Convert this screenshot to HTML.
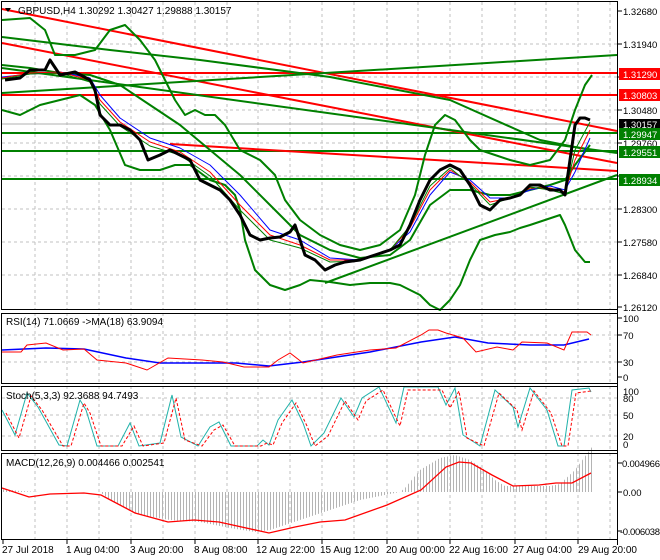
<!DOCTYPE html>
<html><head><meta charset="utf-8"><style>
html,body{margin:0;padding:0;background:#fff;}
svg{display:block;font-family:"Liberation Sans",sans-serif;font-size:10px;}
.r{font-size:9.5px;}
</style></head><body>
<svg width="660" height="560" viewBox="0 0 660 560" xmlns="http://www.w3.org/2000/svg">
<defs>
<pattern id="hb" width="3" height="10" patternUnits="userSpaceOnUse"><rect x="0" y="0" width="1" height="10" fill="#b4b4b4"/></pattern>
</defs>
<rect width="660" height="560" fill="#fff"/>
<g stroke="#c0c0c0" stroke-dasharray="3,3" stroke-width="1">
<path d="M35 2V309M67 2V309M99 2V309M131 2V309M163 2V309M195 2V309M227 2V309M258 2V309M290 2V309M322 2V309M354 2V309M387 2V309M418 2V309M450 2V309M482 2V309M515 2V309M546 2V309M578 2V309M610 2V309"/>
<path d="M2 44H617M2 77H617M2 110H617M2 143H617M2 176H617M2 209H617M2 242H617M2 275H617"/>
<path d="M35 313V384M67 313V384M99 313V384M131 313V384M163 313V384M195 313V384M227 313V384M258 313V384M290 313V384M322 313V384M354 313V384M387 313V384M418 313V384M450 313V384M482 313V384M515 313V384M546 313V384M578 313V384M610 313V384 M2 335H617M2 362H617"/>
<path d="M35 386V450M67 386V450M99 386V450M131 386V450M163 386V450M195 386V450M227 386V450M258 386V450M290 386V450M322 386V450M354 386V450M387 386V450M418 386V450M450 386V450M482 386V450M515 386V450M546 386V450M578 386V450M610 386V450 M2 398H617M2 415H617M2 436H617"/>
<path d="M35 453V539M67 453V539M99 453V539M131 453V539M163 453V539M195 453V539M227 453V539M258 453V539M290 453V539M322 453V539M354 453V539M387 453V539M418 453V539M450 453V539M482 453V539M515 453V539M546 453V539M578 453V539M610 453V539"/>
</g>
<g fill="none" stroke-linejoin="round">
<line x1="2" y1="124" x2="617" y2="124" stroke="#b0b0b0"/>
<line x1="2" y1="73" x2="617" y2="73" stroke="#ff0000" stroke-width="2"/>
<line x1="2" y1="95" x2="617" y2="95" stroke="#ff0000" stroke-width="2"/>
<line x1="2" y1="133" x2="617" y2="133" stroke="#008000" stroke-width="2"/>
<line x1="2" y1="151" x2="617" y2="151" stroke="#008000" stroke-width="2"/>
<line x1="2" y1="179" x2="617" y2="179" stroke="#008000" stroke-width="2"/>
<line x1="2" y1="9" x2="617" y2="131" stroke="#ff0000" stroke-width="2"/>
<line x1="2" y1="43" x2="617" y2="163" stroke="#ff0000" stroke-width="2"/>
<line x1="170" y1="144" x2="617" y2="171" stroke="#ff0000" stroke-width="2"/>
<line x1="2" y1="93" x2="617" y2="55" stroke="#008000" stroke-width="2"/>
<line x1="2" y1="68" x2="617" y2="153" stroke="#008000" stroke-width="2"/>
<polyline points="2,37 110,50 200,60 330,77 450,100 540,140 590,150" stroke="#008000" stroke-width="2"/>
<line x1="325" y1="283" x2="617" y2="175" stroke="#008000" stroke-width="2"/>
<polyline stroke="#008000" stroke-width="2" points="2,20 30,18 45,30 55,55 75,55 95,50 110,30 125,25 140,40 155,60 165,80 175,100 185,115 195,110 205,115 215,115 225,125 240,150 260,160 275,175 285,200 300,220 320,235 340,245 360,250 380,245 400,230 415,195 425,155 435,125 445,115 455,120 470,140 480,150 495,155 510,160 530,165 550,160 565,140 575,110 585,85 592,75"/>
<polyline stroke="#008000" stroke-width="2" points="2,110 20,115 40,105 60,100 80,95 95,105 110,130 125,165 140,170 160,170 175,165 190,165 210,180 225,185 235,195 240,210 245,240 255,270 270,285 285,290 300,285 310,280 330,282 350,285 370,283 390,283 400,285 410,290 420,295 430,305 440,310 450,300 460,285 470,260 480,240 495,235 510,232 520,228 530,225 545,220 560,215 565,225 575,250 585,262 590,262"/>
<polyline stroke="#008000" stroke-width="2" points="2,65 30,68 60,73 90,75 120,85 150,105 180,125 210,150 240,175 270,205 300,235 330,250 360,258 390,255 410,240 430,205 450,190 470,190 490,195 510,195 530,190 550,185 565,180 575,165 590,145"/>
<polyline stroke="#0000ff" stroke-width="1" points="2,77 30,74 60,72 90,78 100,95 120,118 150,138 180,148 210,165 240,195 270,230 300,240 330,258 360,260 390,250 410,232 430,195 450,172 470,180 490,198 510,198 530,190 550,186 565,190 575,172 590,138"/>
<polyline stroke="#ff0000" stroke-width="1" points="2,78 30,73 60,72 90,80 100,100 120,122 150,142 180,152 210,172 240,205 270,235 300,245 330,260 360,260 390,250 410,228 430,190 450,170 470,182 490,202 510,198 530,188 550,188 565,192 575,160 590,130"/>
<polyline stroke="#008000" stroke-width="1" points="2,79 30,74 60,73 90,82 100,104 120,126 150,146 180,155 210,176 240,210 270,240 300,248 330,262 360,261 390,250 410,226 430,186 450,168 470,184 490,205 510,198 530,187 550,190 565,194 575,150 590,122"/>
<polyline stroke="#000" stroke-width="3" points="5,80 20,78 30,70 45,70 50,60 60,75 75,72 90,80 95,90 100,115 110,125 120,125 130,130 140,140 148,160 160,155 170,150 180,155 190,160 200,180 210,185 220,190 230,200 240,215 250,235 260,240 270,238 280,237 290,232 295,225 300,240 305,255 315,260 325,270 335,265 345,262 360,260 375,255 390,250 400,245 410,225 420,200 430,180 440,170 450,165 460,170 470,185 480,205 490,210 500,200 510,198 520,195 530,185 540,185 550,190 560,190 565,195 570,160 575,125 580,118 585,118 590,120"/>
</g>
<polyline fill="none" stroke="#0000ff" stroke-width="1.5" points="2,350 46,348 84,349 126,358 160,363 236,363 269,366 303,362 370,352 421,342 455,337 488,343 530,345 564,345 589,339"/>
<polyline fill="none" stroke="#ff0000" stroke-width="1" points="2,352 21,352 27,345 46,343 63,350 84,349 97,360 126,363 147,370 168,358 202,360 223,362 244,367 269,367 278,360 290,353 303,363 337,355 370,350 396,348 421,335 429,330 438,330 446,333 463,338 476,352 497,347 513,350 522,342 547,343 564,350 572,332 587,332 591,335"/>
<polyline fill="none" stroke="#20b2aa" stroke-width="1" points="2,410 15,435 27,393 38,407 59,445 67,446 80,400 86,410 97,446 118,446 130,423 139,446 160,443 172,395 181,437 198,446 210,427 219,422 231,446 257,446 263,440 269,445 278,420 292,400 303,423 311,446 324,433 341,398 354,417 362,398 379,387 396,423 404,387 438,387 446,405 455,388 463,435 480,446 495,390 513,407 518,427 530,388 547,410 558,446 564,446 572,390 589,388 591,392"/>
<polyline fill="none" stroke="#ff0000" stroke-width="1" stroke-dasharray="3,2" transform="translate(4,3)" points="2,410 15,435 27,393 38,407 59,443 67,443 80,400 86,410 97,443 118,443 130,423 139,443 160,440 172,395 181,437 198,443 210,427 219,422 231,443 257,443 263,440 269,442 278,420 292,400 303,423 311,443 324,433 341,398 354,417 362,398 379,387 396,423 404,387 438,387 446,405 455,388 463,435 480,443 495,390 513,407 518,427 530,388 547,410 558,443 564,443 572,390 587,388"/>
<polygon fill="url(#hb)" points="2,489 20,491 40,492 100,492 110,500 140,515 170,520 200,522 230,528 255,532 270,530 300,520 330,510 360,500 400,492 405,488 420,470 440,458 455,455 470,460 485,470 495,480 505,486 520,486 550,486 560,484 575,470 592,447 592,492 2,492"/>
<polyline fill="none" stroke="#ff0000" stroke-width="1.3" points="2,488 29,497 50,494 84,493 101,495 135,513 168,522 194,520 219,522 269,533 295,527 320,522 345,520 387,505 421,490 446,467 459,462 471,463 492,475 513,486 539,485 556,483 572,483 591,473"/>
<g fill="none" stroke="#000" stroke-width="1">
<rect x="1.5" y="1.5" width="616" height="308"/>
<rect x="1.5" y="313.5" width="616" height="70"/>
<rect x="1.5" y="386.5" width="616" height="64"/>
<rect x="1.5" y="453.5" width="616" height="86"/>
<path d="M2 539.5H617M617.5 1V545"/>
<path d="M3 540v4M67 540v4M131 540v4M195 540v4M258 540v4M322 540v4M387 540v4M450 540v4M515 540v4M578 540v4"/>
<path d="M618 11h4M618 44h4M618 77h4M618 110h4M618 143h4M618 176h4M618 209h4M618 242h4M618 275h4M618 307h4 M618 318h4M618 335h4M618 362h4M618 377h4M618 463h4M618 492h4M618 531h4"/>
</g>
<g fill="#000" class="r">
<text x="623" y="15">1.32680</text>
<text x="623" y="48">1.31940</text>
<text x="623" y="114">1.30480</text>
<text x="623" y="147">1.29760</text>
<text x="623" y="213">1.28300</text>
<text x="623" y="246">1.27580</text>
<text x="623" y="279">1.26840</text>
<text x="623" y="311">1.26120</text>
</g>
<g class="r">
<rect x="619" y="68" width="41" height="12" fill="#ff0000"/><text x="623" y="78" fill="#fff">1.31290</text>
<rect x="619" y="89" width="41" height="12" fill="#ff0000"/><text x="623" y="99" fill="#fff">1.30803</text>
<rect x="619" y="119" width="41" height="11" fill="#000"/><text x="623" y="128" fill="#fff">1.30157</text>
<rect x="619" y="128" width="41" height="12" fill="#008000"/><text x="623" y="138" fill="#fff">1.29947</text>
<rect x="619" y="146" width="41" height="12" fill="#008000"/><text x="623" y="156" fill="#fff">1.29551</text>
<rect x="619" y="174" width="41" height="12" fill="#008000"/><text x="623" y="184" fill="#fff">1.28934</text>
</g>
<g fill="#000" class="r">
<text x="623" y="322">100</text><text x="623" y="339">70</text><text x="623" y="366">30</text><text x="623" y="381">0</text>
<text x="623" y="395">100</text><text x="623" y="402">80</text><text x="623" y="419">50</text><text x="623" y="440">20</text><text x="623" y="448">0</text>
<text x="622" y="467" textLength="38">0.004966</text><text x="623" y="496">0.00</text><text x="620" y="535" textLength="40">-0.006038</text>
</g>
<polygon points="5,8 11,8 8,12" fill="#000"/>
<text x="18" y="14" fill="#000">GBPUSD,H4  1.30292 1.30427 1.29888 1.30157</text>
<text x="6" y="325" fill="#000">RSI(14) 71.0669  -&gt;MA(18) 63.9094</text>
<text x="6" y="399" fill="#000">Stoch(5,3,3) 92.3688 94.7493</text>
<text x="6" y="466" fill="#000">MACD(12,26,9) 0.004466 0.002541</text>
<g fill="#000">
<text x="2" y="553">27 Jul 2018</text>
<text x="66" y="553">1 Aug 04:00</text>
<text x="130" y="553">3 Aug 20:00</text>
<text x="194" y="553">8 Aug 08:00</text>
<text x="256" y="553">12 Aug 22:00</text>
<text x="320" y="553">15 Aug 12:00</text>
<text x="386" y="553">20 Aug 00:00</text>
<text x="449" y="553">22 Aug 16:00</text>
<text x="513" y="553">27 Aug 04:00</text>
<text x="578" y="553">29 Aug 20:00</text>
</g>
</svg>
</body></html>
